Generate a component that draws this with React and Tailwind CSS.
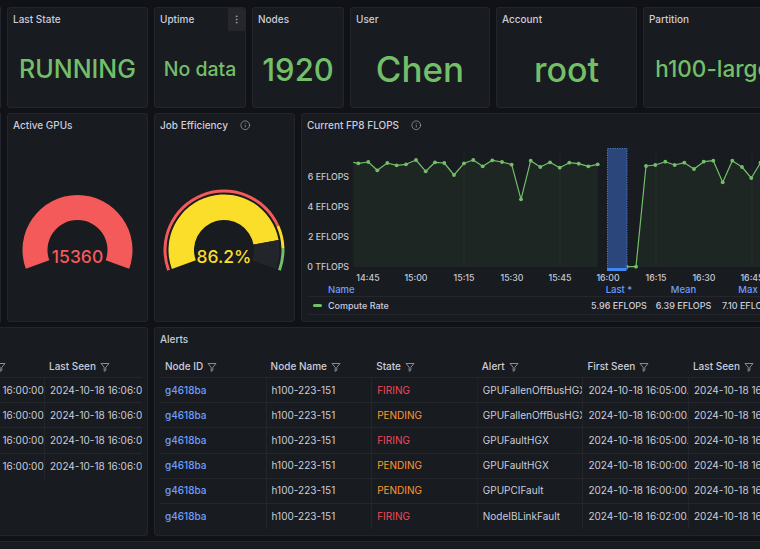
import React from "react";
import { Info, EllipsisVertical } from "lucide-react";

const GREEN = "#73bf69";
const YELLOW = "#fade2a";

const seg1 = [
  [353.3, 162.3], [358.3, 163.3], [368.3, 162], [377.3, 170.3], [387.3, 163], [396.7, 165.3],
  [406, 164.3], [416, 160], [425.7, 171.3], [435, 162.3], [444.3, 163], [454, 175],
  [464, 163.3], [473.3, 160], [482.7, 166.3], [492.3, 160.3], [502, 162], [511.7, 164.7],
  [521, 199.3], [530.7, 160.7], [540.3, 167], [550, 162.3], [559.7, 167.7], [569.3, 162.7],
  [578.7, 163.7], [588.3, 166.3], [597.7, 164.3],
];
const seg2 = [
  [626.7, 266.7], [636, 266.7], [646, 166], [655.3, 165], [665.3, 161.7], [674.7, 165],
  [684.3, 162.7], [694, 169], [703.7, 161.7], [713.3, 160.7], [722.7, 182.3], [732.3, 160.7],
  [742, 167], [751.3, 178], [760.5, 162.7], [770, 161.5], [779.5, 166], [789, 163], [798.5, 165],
  [808, 162],
];

const xTicks = ["14:45", "15:00", "15:15", "15:30", "15:45", "16:00", "16:15", "16:30", "16:45", "17:00"];
const yTicks = [
  ["6 EFLOPS", 176],
  ["4 EFLOPS", 206.5],
  ["2 EFLOPS", 236.5],
  ["0 TFLOPS", 266.5],
];

const alerts = [
  ["FIRING", "GPUFallenOffBusHGX", "2024-10-18 16:05:00.000"],
  ["PENDING", "GPUFallenOffBusHGX", "2024-10-18 16:00:00.000"],
  ["FIRING", "GPUFaultHGX", "2024-10-18 16:05:00.000"],
  ["PENDING", "GPUFaultHGX", "2024-10-18 16:00:00.000"],
  ["PENDING", "GPUPCIFault", "2024-10-18 16:00:00.000"],
  ["FIRING", "NodeIBLinkFault", "2024-10-18 16:02:00.000"],
];

function arc(cx, cy, ro, ri, a0, a1) {
  const p = (r, a) => [cx + r * Math.cos((a * Math.PI) / 180), cy - r * Math.sin((a * Math.PI) / 180)];
  const large = a0 - a1 > 180 ? 1 : 0;
  const [x0, y0] = p(ro, a0);
  const [x1, y1] = p(ro, a1);
  const [x2, y2] = p(ri, a1);
  const [x3, y3] = p(ri, a0);
  return `M${x0} ${y0} A${ro} ${ro} 0 ${large} 1 ${x1} ${y1} L${x2} ${y2} A${ri} ${ri} 0 ${large} 0 ${x3} ${y3} Z`;
}

// gauge fraction -> angle
const ang = (f) => 200 - 220 * f;

function Funnel() {
  return (
    <svg width="10" height="10" viewBox="0 0 12 12" fill="none" stroke="#a0a0b0" strokeWidth="1" strokeLinejoin="round" className="shrink-0">
      <path d="M1.2 1.8h9.6L7 6.4v3.6l-2 1.2V6.4z" />
    </svg>
  );
}

function Panel({ className, children }) {
  return (
    <div className={`relative shrink-0 overflow-hidden rounded-[3px] border border-[#23252b] bg-[#181b1f] ${className}`}>
      {children}
    </div>
  );
}

function Title({ children, info, className = "h-[26px]" }) {
  return (
    <div className={`flex items-start gap-[12px] px-[5px] pt-[5px] text-[10px] font-medium leading-[13px] text-[#ccccdc] ${className}`}>
      <span className="whitespace-nowrap">{children}</span>
      {info && <Info size={10.5} strokeWidth={1.6} className="mt-[1px] text-[#a9a9b8]" />}
    </div>
  );
}

function Stat({ title, value, className, size, menu }) {
  return (
    <Panel className={`flex h-full flex-col ${className}`}>
      <Title className="h-[24px]">{title}</Title>
      {menu && (
        <div className="absolute right-0 top-0 flex h-[23px] w-[17px] items-center justify-center rounded-[2px] bg-[#25272d]">
          <EllipsisVertical size={11} className="text-[#9a9aa8]" />
        </div>
      )}
      <div className={`flex flex-1 items-center justify-center whitespace-nowrap font-medium leading-none text-[#73bf69] ${size}`}>
        {value}
      </div>
    </Panel>
  );
}

function ActiveGauge() {
  return (
    <svg width={139} height={181} viewBox="8 140 139 181" className="block">
      <path d={arc(77.5, 250, 55, 30, ang(0), ang(1))} fill="#f55a5a" />
      <text x={77.5} y={256} textAnchor="middle" dominantBaseline="central" fill="#f55a5a" fontSize="17.5" fontWeight="500" fontFamily="Inter, sans-serif">
        15360
      </text>
    </svg>
  );
}

function EffGauge() {
  return (
    <svg width={139} height={181} viewBox="155 140 139 181" className="block">
      <path d={arc(224, 250, 60.5, 57.5, ang(0), ang(0.8))} fill="#f55a5a" />
      <path d={arc(224, 250, 60.5, 57.5, ang(0.8), ang(0.9))} fill={YELLOW} />
      <path d={arc(224, 250, 60.5, 57.5, ang(0.9), ang(1))} fill={GREEN} />
      <path d={arc(224, 250, 55.5, 30, ang(0), ang(0.862))} fill={YELLOW} />
      <path d={arc(224, 250, 55.5, 30, ang(0.862), ang(1))} fill="#22252a" />
      <text x={224} y={256} textAnchor="middle" dominantBaseline="central" fill={YELLOW} fontSize="17.5" fontWeight="500" fontFamily="Inter, sans-serif">
        86.2%
      </text>
    </svg>
  );
}

function Chart() {
  const pts = (s) => s.map((p) => p.join(",")).join(" ");
  const area = (s) => `${s[0][0]},267 ${pts(s)} ${s[s.length - 1][0]},267`;
  return (
    <svg width={518} height={143} viewBox="302 140 518 143" className="block">
      {[464, 560, 656, 752].map((x) => (
        <line key={x} x1={x} x2={x} y1={150} y2={267} stroke="#ccccdc" strokeOpacity="0.05" />
      ))}
      <polygon points={area(seg1)} fill={GREEN} fillOpacity="0.07" />
      <polygon points={area(seg2)} fill={GREEN} fillOpacity="0.07" />
      <polyline points={pts(seg1)} fill="none" stroke={GREEN} strokeWidth="1.2" strokeLinejoin="round" />
      <polyline points={pts(seg2)} fill="none" stroke={GREEN} strokeWidth="1.2" strokeLinejoin="round" />
      {[...seg1.slice(1), ...seg2].map(([x, y], i) => (
        <circle key={i} cx={x} cy={y} r="1.9" fill={GREEN} />
      ))}
      <rect x={607.5} y={148.5} width={19.5} height={121} fill="#2c4b85" fillOpacity="0.9" stroke="#5c8fe6" strokeWidth="0.8" strokeDasharray="1.2 1.2" />
      <rect x={607} y={268} width={19.5} height={3} fill="#3f87f2" />
      {yTicks.map(([t, y]) => (
        <text key={t} x={349} y={y} textAnchor="end" dominantBaseline="central" fill="#c7c7d4" fontSize="8.8" fontWeight="500" fontFamily="Inter, sans-serif">
          {t}
        </text>
      ))}
      {xTicks.map((t, i) => (
        <text key={t} x={368 + 48 * i} y={277.5} textAnchor="middle" dominantBaseline="central" fill="#c7c7d4" fontSize="8.8" fontWeight="500" fontFamily="Inter, sans-serif">
          {t}
        </text>
      ))}
    </svg>
  );
}

function Legend() {
  return (
    <div className="ml-[7px] w-[480px] text-[9px] font-medium text-[#ccccdc]">
      <div className="grid h-[14px] grid-cols-[278px_64px_65px_64px] items-center border-b border-[#25272d] text-[9.5px] text-[#6e9fff]">
        <span className="pl-[19px]">Name</span>
        <span className="text-center">Last *</span>
        <span className="text-center">Mean</span>
        <span className="text-center">Max</span>
      </div>
      <div className="grid h-[18px] grid-cols-[278px_64px_65px_64px] items-center whitespace-nowrap border-b border-[#25272d]">
        <span className="flex items-center gap-[6px] pl-[4px]">
          <span className="h-[3px] w-[9px] rounded-full bg-[#73bf69]" />
          Compute Rate
        </span>
        <span className="text-center">5.96 EFLOPS</span>
        <span className="text-center">6.39 EFLOPS</span>
        <span className="text-center">7.10 EFLOPS</span>
      </div>
    </div>
  );
}

function HeadCell({ children }) {
  return (
    <div className="flex items-center gap-[4px] overflow-hidden whitespace-nowrap px-[5px]">
      <span>{children}</span>
      <Funnel />
    </div>
  );
}

const cell = "flex items-center overflow-hidden whitespace-nowrap px-[5px]";

function AlertsTable() {
  return (
    <div className="mx-[5px] text-[10px] text-[#ccccdc]">
      <div className="grid h-[22px] grid-cols-[repeat(6,105.6px)] items-center border-b border-[#25272d] font-medium">
        <HeadCell>Node ID</HeadCell>
        <HeadCell>Node Name</HeadCell>
        <HeadCell>State</HeadCell>
        <HeadCell>Alert</HeadCell>
        <HeadCell>First Seen</HeadCell>
        <HeadCell>Last Seen</HeadCell>
      </div>
      {alerts.map(([state, alert, first], i) => (
        <div key={i} className={`grid h-[25.2px] grid-cols-[repeat(6,105.6px)] ${i < alerts.length - 1 ? "border-b border-[#25272d]" : ""}`}>
          <div className={`${cell} font-medium text-[#6e9fff]`}>g4618ba</div>
          <div className={`${cell} border-l border-[#23252b]`}>h100-223-151</div>
          <div className={`${cell} border-l border-[#23252b] ${state === "FIRING" ? "text-[#f2495c]" : "text-[#ff9830]"}`}>{state}</div>
          <div className={`${cell} border-l border-[#1f2126]`}>{alert}</div>
          <div className={`${cell} border-l border-[#23252b]`}>{first}</div>
          <div className={`${cell} border-l border-[#23252b]`}>2024-10-18 16:06:00.000</div>
        </div>
      ))}
    </div>
  );
}

function NodesTable() {
  return (
    <div className="mx-[5px] w-[336px] overflow-hidden text-[10px] text-[#ccccdc]">
      <div className="grid h-[22px] grid-cols-[133px_105px_105px] items-center border-b border-[#25272d] font-medium">
        <HeadCell>Node</HeadCell>
        <HeadCell>First Seen</HeadCell>
        <HeadCell>Last Seen</HeadCell>
      </div>
      {[0, 1, 2, 3].map((i) => (
        <div key={i} className={`grid h-[25.2px] grid-cols-[133px_105px_105px] ${i < 3 ? "border-b border-[#25272d]" : ""}`}>
          <div className={cell}>g4618ba</div>
          <div className={`${cell} border-l border-[#23252b]`}>2024-10-18 16:00:00.000</div>
          <div className={`${cell} border-l border-[#23252b]`}>2024-10-18 16:06:00.000</div>
        </div>
      ))}
    </div>
  );
}

export default function App() {
  return (
    <div className="h-[549px] w-[760px] overflow-hidden bg-[#111217]" style={{ fontFamily: "Inter, 'Noto Sans', sans-serif" }}>
      <div className="flex w-[840px] flex-col gap-[5px] pt-[7px]">
        {/* stats */}
        <div className="flex h-[101px] gap-[6px]">
          <div className="h-full w-px shrink-0 bg-[#23252b]" />
          <Stat title="Last State" value="RUNNING" className="w-[141px]" size="text-[25px]" />
          <Stat title="Uptime" value="No data" className="w-[92px]" size="text-[19.5px]" menu />
          <Stat title="Nodes" value="1920" className="w-[92px]" size="text-[31px]" />
          <Stat title="User" value="Chen" className="w-[140px]" size="text-[35px]" />
          <Stat title="Account" value="root" className="w-[141px]" size="text-[34px]" />
          <Stat title="Partition" value="h100-large" className="w-[140px]" size="text-[22.5px]" />
        </div>

        {/* gauges + chart */}
        <div className="flex h-[209px] gap-[6px]">
          <div className="h-full w-px shrink-0 bg-[#23252b]" />
          <Panel className="w-[141px]">
            <Title>Active GPUs</Title>
            <ActiveGauge />
          </Panel>
          <Panel className="w-[141px]">
            <Title info>Job Efficiency</Title>
            <EffGauge />
          </Panel>
          <Panel className="w-[520px]">
            <Title info>Current FP8 FLOPS</Title>
            <Chart />
            <Legend />
          </Panel>
        </div>

        {/* tables */}
        <div className="flex h-[209px] gap-[6px]">
          <Panel className="-ml-[200px] w-[348px]">
            <div className="h-[28px]" />
            <NodesTable />
          </Panel>
          <Panel className="w-[680px]">
            <Title className="h-[28px]">Alerts</Title>
            <AlertsTable />
          </Panel>
        </div>

        <div className="h-[40px] w-full border-t border-[#23252b] bg-[#181b1f]" />
      </div>
    </div>
  );
}
